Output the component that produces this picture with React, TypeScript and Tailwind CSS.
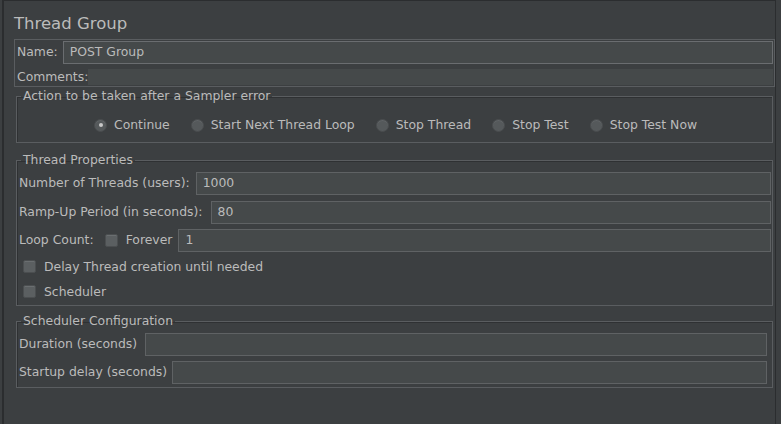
import React from "react";

function Radio({ label, checked }: { label: string; checked?: boolean }) {
  return (
    <div className="flex items-center gap-[7px]">
      <span className="w-[13px] h-[13px] rounded-full bg-[#55595b] border border-[#4a4d4f] shadow-[inset_0_1px_0_#616567] flex items-center justify-center">
        {checked && <span className="w-[4px] h-[4px] rounded-full bg-[#c8c8c8]" />}
      </span>
      <span>{label}</span>
    </div>
  );
}

function Check({ label }: { label: string }) {
  return (
    <div className="flex items-center gap-[8px]">
      <span className="w-[13px] h-[13px] rounded-[2px] bg-[#5b5f61] border border-[#4b4e50] shadow-[inset_0_1px_0_#6a6e70]" />
      <span>{label}</span>
    </div>
  );
}

function Field({ value, className = "" }: { value?: string; className?: string }) {
  return (
    <div
      className={`flex-1 h-[23px] bg-[#45494a] border border-[#5f6264] flex items-center px-[6px] ${className}`}
    >
      {value}
    </div>
  );
}

function Group({ title, children, className = "" }: { title: string; children: React.ReactNode; className?: string }) {
  return (
    <fieldset className={`border border-[#5a5d60] shadow-[inset_1px_1px_0_#2f3133] mx-[2px] ${className}`}>
      <legend className="ml-[4px] px-[2px] leading-[16px]">{title}</legend>
      {children}
    </fieldset>
  );
}

export default function App() {
  return (
    <div className="w-[781px] h-[424px] bg-[#3c3f41] text-[#bbbbbb] text-[12.4px] font-['DejaVu_Sans',sans-serif] overflow-hidden">
      <div className="h-full ml-[2px] mr-[5px] border-l-2 border-r border-t border-[#2b2d2f] pl-[10px]">
        <div className="pt-[13px] text-[16.5px] leading-[20px]">Thread Group</div>

        <div className="mt-[5px] border border-[#5a5d60] h-[48px] px-[1px] pt-[1px]">
          <div className="flex items-center">
            <span className="ml-[1px] mr-[5px]">Name:</span>
            <Field value="POST Group" className="border-[#6a6d70]" />
          </div>
          <div className="flex items-center mt-[5px] h-[16px]">
            <span className="ml-[1px]">Comments:</span>
            <div className="flex-1 h-[16px] bg-[#45494a]" />
          </div>
        </div>

        <Group title="Action to be taken after a Sampler error" className="mt-[1px] h-[55px]">
          <div className="flex items-center gap-[21px] pl-[77px] pt-[12px]">
            <Radio label="Continue" checked />
            <Radio label="Start Next Thread Loop" />
            <Radio label="Stop Thread" />
            <Radio label="Stop Test" />
            <Radio label="Stop Test Now" />
          </div>
        </Group>

        <Group title="Thread Properties" className="mt-[9px] h-[154px] pr-[1px]">
          <div className="flex flex-col pl-[2px] pt-[4px]">
            <div className="flex items-center">
              <span className="mr-[6px]">Number of Threads (users):</span>
              <Field value="1000" />
            </div>
            <div className="flex items-center mt-[6px]">
              <span className="mr-[8px]">Ramp-Up Period (in seconds):</span>
              <Field value="80" />
            </div>
            <div className="flex items-center mt-[5px]">
              <span className="mr-[11px]">Loop Count:</span>
              <Check label="Forever" />
              <div className="w-[6px]" />
              <Field value="1" />
            </div>
            <div className="pl-[4px] h-[22px] mt-[4px] flex items-center">
              <Check label="Delay Thread creation until needed" />
            </div>
            <div className="pl-[4px] h-[22px] mt-[3px] flex items-center">
              <Check label="Scheduler" />
            </div>
          </div>
        </Group>

        <Group title="Scheduler Configuration" className="mt-[7px] h-[75px] pr-[5px]">
          <div className="flex flex-col gap-[5px] pl-[2px] pt-[4px]">
            <div className="flex items-center">
              <span className="mr-[8px]">Duration (seconds)</span>
              <Field />
            </div>
            <div className="flex items-center">
              <span className="mr-[5px]">Startup delay (seconds)</span>
              <Field />
            </div>
          </div>
        </Group>
      </div>
    </div>
  );
}
